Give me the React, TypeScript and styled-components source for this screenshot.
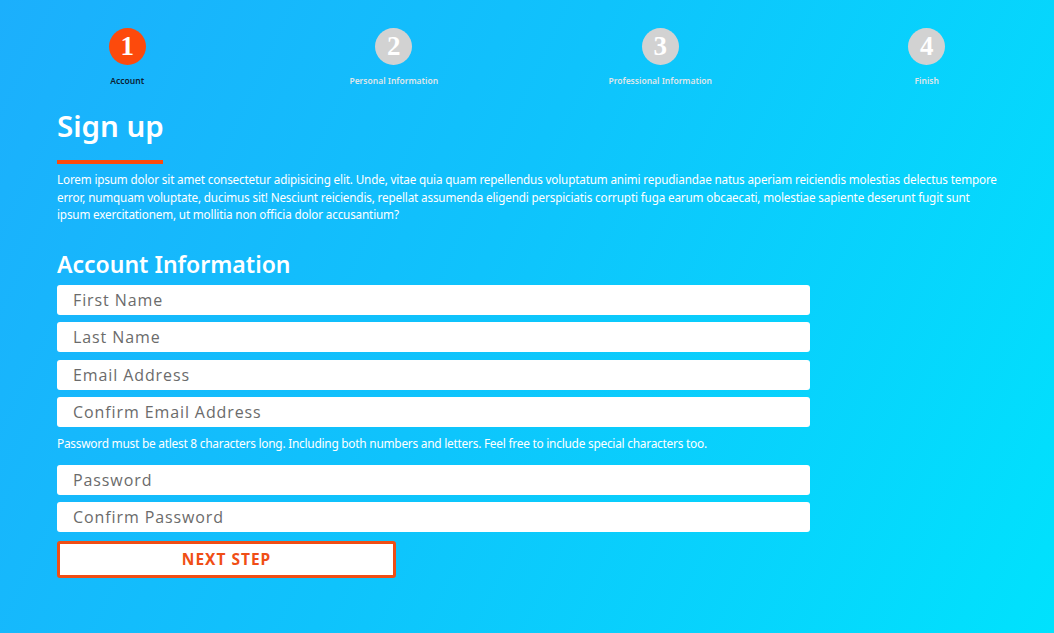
import React from "react";
import styled, { createGlobalStyle } from "styled-components";

const Global = createGlobalStyle`
  html, body { margin: 0; padding: 0; }
  body { font-family: "Noto Sans", "Open Sans", sans-serif; }
  * { box-sizing: border-box; }
`;

const Page = styled.div`
  min-height: 100vh;
  background: linear-gradient(115deg, #1caffc 0%, #0fc3fc 45%, #00e2fd 100%);
  padding-top: 28px;
  overflow: hidden;
`;

const Steps = styled.div`
  display: grid;
  grid-template-columns: repeat(4, 1fr);
  margin: 0 -6px;
`;

const Step = styled.div`
  display: flex;
  flex-direction: column;
  align-items: center;
`;

const Circle = styled.div<{ $active?: boolean }>`
  width: 37px;
  height: 37px;
  border-radius: 50%;
  background: ${(p) => (p.$active ? "#fd4a0c" : "#d2d2d2")};
  color: #fff;
  display: flex;
  align-items: center;
  justify-content: center;
  font-family: "Liberation Serif", "DejaVu Serif", serif;
  font-weight: 700;
  font-size: 27px;
  line-height: 1;
`;

const StepLabel = styled.div<{ $active?: boolean }>`
  margin-top: 10px;
  font-size: 8.5px;
  font-weight: 600;
  color: ${(p) => (p.$active ? "#0b2233" : "#dfe6ea")};
`;

const Container = styled.div`
  width: 940px;
  margin: 0 auto;
  color: #fff;
`;

const Title = styled.h1`
  margin: 20px 0 0;
  font-size: 29.5px;
  font-weight: 600;
  line-height: 40px;
  color: #fff;
`;

const Underline = styled.div`
  width: 106px;
  height: 4px;
  background: #fd4a0c;
  margin-top: 14px;
`;

const Lead = styled.p`
  margin: 7px 0 0;
  font-size: 11.7px;
  line-height: 17.6px;
  letter-spacing: -0.15px;
  color: #fff;
`;

const SectionTitle = styled.h2`
  margin: 25px 0 0;
  font-size: 23px;
  font-weight: 600;
  line-height: 30px;
  color: #fff;
`;

const Form = styled.form`
  width: 753px;
  display: flex;
  flex-direction: column;
  margin-top: 6px;
`;

const Input = styled.input`
  height: 30px;
  border: none;
  border-radius: 3px;
  background: #fff;
  padding: 0 16px;
  font-family: "Open Sans", "Lato", sans-serif;
  font-size: 16px;
  letter-spacing: 0.9px;
  color: #555;
  margin-bottom: 7.5px;
  outline: none;
  &::placeholder { color: #6b6b6b; }
`;

const Hint = styled.div`
  font-size: 11.9px;
  line-height: 16px;
  letter-spacing: -0.25px;
  color: #fff;
  margin: 0 0 14px;
`;

const Button = styled.button`
  width: 339px;
  height: 37px;
  margin-top: 1px;
  background: #fff;
  border: 3px solid #f04e15;
  border-radius: 3px;
  color: #f04e15;
  font-family: "Noto Sans", "Open Sans", sans-serif;
  font-weight: 700;
  font-size: 15.5px;
  letter-spacing: 1px;
  cursor: pointer;
`;

const steps = ["Account", "Personal Information", "Professional Information", "Finish"];

export default function App() {
  return (
    <>
      <Global />
      <Page>
        <Steps>
          {steps.map((s, i) => (
            <Step key={s}>
              <Circle $active={i === 0}>{i + 1}</Circle>
              <StepLabel $active={i === 0}>{s}</StepLabel>
            </Step>
          ))}
        </Steps>
        <Container>
          <Title>Sign up</Title>
          <Underline />
          <Lead>
            Lorem ipsum dolor sit amet consectetur adipisicing elit. Unde, vitae quia quam repellendus voluptatum animi repudiandae natus aperiam reiciendis molestias delectus tempore error, numquam voluptate, ducimus sit! Nesciunt reiciendis, repellat assumenda eligendi perspiciatis corrupti fuga earum obcaecati, molestiae sapiente deserunt fugit sunt ipsum exercitationem, ut mollitia non officia dolor accusantium?
          </Lead>
          <SectionTitle>Account Information</SectionTitle>
          <Form onSubmit={(e) => e.preventDefault()}>
            <Input placeholder="First Name" />
            <Input placeholder="Last Name" />
            <Input placeholder="Email Address" />
            <Input placeholder="Confirm Email Address" />
            <Hint>
              Password must be atlest 8 characters long. Including both numbers and letters. Feel free to include special characters too.
            </Hint>
            <Input type="password" placeholder="Password" />
            <Input type="password" placeholder="Confirm Password" />
            <Button type="submit">NEXT STEP</Button>
          </Form>
        </Container>
      </Page>
    </>
  );
}
